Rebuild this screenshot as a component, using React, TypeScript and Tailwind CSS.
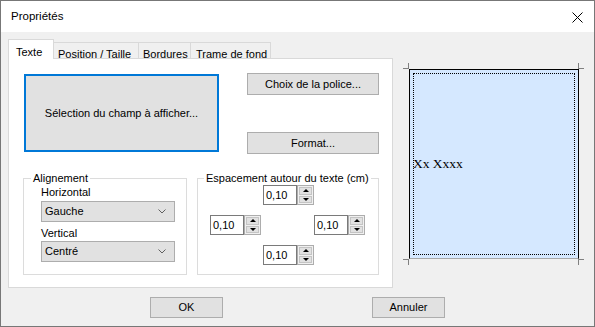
import React from "react";

const ui = { fontFamily: '"Liberation Sans", Arial, sans-serif' };

function SpinBox() {
  return (
    <div className="flex h-[20px]">
      <div className="w-[34px] h-[20px] border border-[#7a7a7a] bg-white pl-[2px] flex items-center leading-none">
        0,10
      </div>
      <div className="w-[17px] h-[20px] flex flex-col border border-[#adadad] bg-[#f0f0f0] p-[1px] gap-[1px]">
        <div className="flex-1 bg-[#e1e1e1] border border-[#c4c4c4] flex items-center justify-center">
          <span className="block w-0 h-0 border-l-[3px] border-r-[3px] border-b-[3px] border-l-transparent border-r-transparent border-b-black" />
        </div>
        <div className="flex-1 bg-[#e1e1e1] border border-[#c4c4c4] flex items-center justify-center">
          <span className="block w-0 h-0 border-l-[3px] border-r-[3px] border-t-[3px] border-l-transparent border-r-transparent border-t-black" />
        </div>
      </div>
    </div>
  );
}

function Select({ value }: { value: string }) {
  return (
    <div className="w-[134px] h-[21px] bg-[#e1e1e1] border border-[#adadad] flex items-center justify-between pl-[3px] pr-[8px]">
      <span>{value}</span>
      <svg width="8" height="5" viewBox="0 0 8 5">
        <path d="M0.5 0.5 L4 4 L7.5 0.5" fill="none" stroke="#606060" strokeWidth="1" />
      </svg>
    </div>
  );
}

function Mark({ cls }: { cls: string }) {
  return <span className={"absolute bg-[#808080] " + cls} />;
}

export default function App() {
  return (
    <div
      className="w-[595px] h-[327px] border border-[#777777] flex flex-col text-[11px] text-black"
      style={ui}
    >
      {/* title bar */}
      <div className="h-[31px] bg-white flex items-center justify-between pl-[10px] pr-[11px] shrink-0">
        <span className="text-[11.5px]">Propriétés</span>
        <svg width="11" height="11" viewBox="0 0 11 11" className="mt-[1px]">
          <path d="M0.5 0.5 L10.5 10.5 M10.5 0.5 L0.5 10.5" stroke="#000" strokeWidth="1" />
        </svg>
      </div>

      <div className="flex-1 bg-[#f0f0f0] flex flex-col pl-[7px] pt-[7px]">
        <div className="flex">
          {/* tab control */}
          <div className="w-[385px] flex flex-col">
            <div className="flex items-end h-[20px] -mb-px relative z-10">
              <div className="w-[46px] h-[20px] bg-white border border-b-0 border-[#d9d9d9] pl-[7px] pt-[4px]">
                Texte
              </div>
              <div className="w-[85px] h-[17px] border border-l-0 border-[#d9d9d9] pl-[4px] pt-[3px] whitespace-nowrap">
                Position / Taille
              </div>
              <div className="w-[52px] h-[17px] border border-l-0 border-[#d9d9d9] pl-[4px] pt-[3px] whitespace-nowrap">
                Bordures
              </div>
              <div className="w-[80px] h-[17px] border border-l-0 border-[#d9d9d9] pl-[5px] pt-[3px] whitespace-nowrap">
                Trame de fond
              </div>
            </div>
            <div className="h-[230px] bg-white border border-[#d9d9d9] pl-[15px] pt-[15px]">
              <div className="flex items-start">
                <div className="w-[195px] h-[78px] border-2 border-[#0078d7] bg-[#e1e1e1] flex items-center justify-center">
                  Sélection du champ à afficher...
                </div>
                <div className="ml-[28px] -mt-px flex flex-col">
                  <div className="w-[132px] h-[22px] bg-[#e1e1e1] border border-[#adadad] flex items-center justify-center">
                    Choix de la police...
                  </div>
                  <div className="mt-[37px] w-[132px] h-[22px] bg-[#e1e1e1] border border-[#adadad] flex items-center justify-center">
                    Format...
                  </div>
                </div>
              </div>

              <div className="flex mt-[18px] -ml-px">
                <fieldset className="w-[164px] h-[103px] border border-[#dcdcdc]">
                  <legend className="ml-[7px] px-[2px] leading-[13px] whitespace-nowrap">Alignement</legend>
                  <div className="pl-[17px]">
                    <div className="mt-[1px] leading-[13px]">Horizontal</div>
                    <div className="mt-[2px]">
                      <Select value="Gauche" />
                    </div>
                    <div className="mt-[5px] leading-[13px]">Vertical</div>
                    <div className="mt-[1px]">
                      <Select value="Centré" />
                    </div>
                  </div>
                </fieldset>

                <fieldset className="ml-[10px] w-[182px] h-[103px] border border-[#dcdcdc]">
                  <legend className="ml-[6px] px-[2px] leading-[13px] whitespace-nowrap">
                    Espacement autour du texte (cm)
                  </legend>
                  <div className="pl-[12px] flex flex-col gap-[10px]">
                    <div className="pl-[53px]">
                      <SpinBox />
                    </div>
                    <div className="flex">
                      <SpinBox />
                      <div className="ml-[53px]">
                        <SpinBox />
                      </div>
                    </div>
                    <div className="pl-[53px]">
                      <SpinBox />
                    </div>
                  </div>
                </fieldset>
              </div>
            </div>
          </div>

          {/* preview */}
          <div className="ml-[16px] mt-[30px] relative w-[170px] h-[190px]">
            <div className="w-[170px] h-[190px] bg-[#d5e8ff] border border-black border-b-[#a8a8a8] p-[3px]">
              <div className="w-full h-full border border-dotted border-black" />
            </div>
            <div
              className="absolute inset-0 flex items-center pl-[4px] text-[13.5px]"
              style={{ fontFamily: '"Liberation Serif", "Times New Roman", serif' }}
            >
              Xx Xxxx
            </div>
            <Mark cls="left-[-6px] top-[-1px] w-[6px] h-px" />
            <Mark cls="left-[-1px] top-[-6px] w-px h-[6px]" />
            <Mark cls="left-[169px] top-[-6px] w-px h-[6px]" />
            <Mark cls="left-[169px] top-[-1px] w-[6px] h-px" />
            <Mark cls="left-[-6px] top-[190px] w-[6px] h-px" />
            <Mark cls="left-[-1px] top-[190px] w-px h-[6px]" />
            <Mark cls="left-[169px] top-[190px] w-px h-[6px]" />
            <Mark cls="left-[169px] top-[190px] w-[6px] h-px" />
          </div>
        </div>

        {/* buttons */}
        <div className="flex mt-[9px]">
          <div className="ml-[142px] w-[73px] h-[21px] bg-[#e1e1e1] border border-[#adadad] flex items-center justify-center">
            OK
          </div>
          <div className="ml-[149px] w-[73px] h-[21px] bg-[#e1e1e1] border border-[#adadad] flex items-center justify-center">
            Annuler
          </div>
        </div>
      </div>
    </div>
  );
}
